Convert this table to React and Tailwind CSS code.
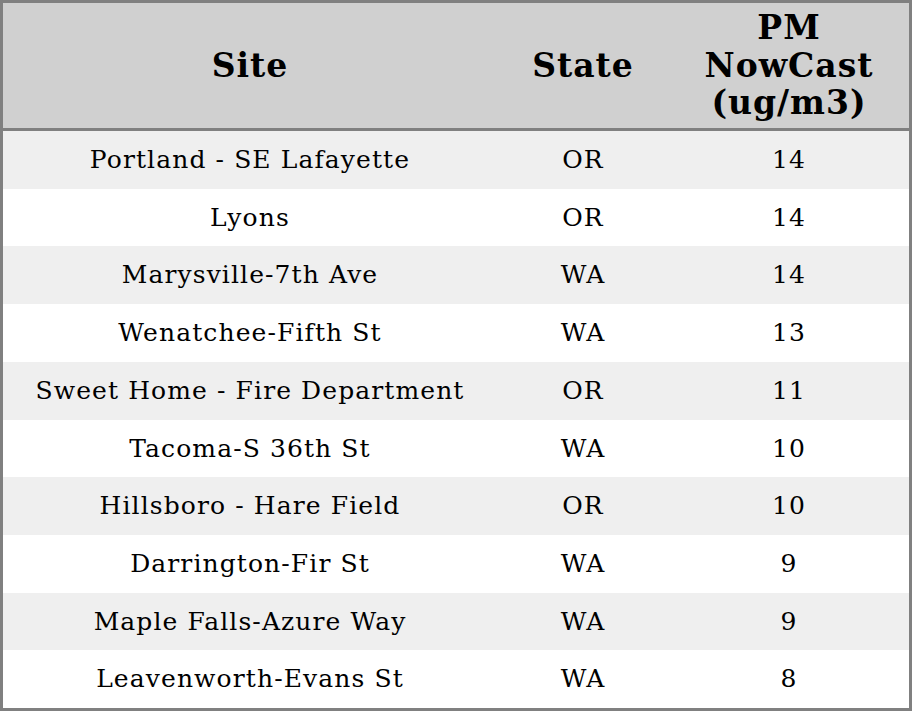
import React from "react";

const rows = [
  ["Portland - SE Lafayette", "OR", "14"],
  ["Lyons", "OR", "14"],
  ["Marysville-7th Ave", "WA", "14"],
  ["Wenatchee-Fifth St", "WA", "13"],
  ["Sweet Home - Fire Department", "OR", "11"],
  ["Tacoma-S 36th St", "WA", "10"],
  ["Hillsboro - Hare Field", "OR", "10"],
  ["Darrington-Fir St", "WA", "9"],
  ["Maple Falls-Azure Way", "WA", "9"],
  ["Leavenworth-Evans St", "WA", "8"],
];

export default function App() {
  return (
    <div
      className="w-[912px] h-[711px] border-[3px] border-[#808080] bg-white flex flex-col text-black"
      style={{ fontFamily: '"DejaVu Serif", serif' }}
    >
      <div className="grid grid-cols-[494px_172px_1fr] h-[128px] shrink-0 bg-[#d0d0d0] border-b-[3px] border-[#808080] text-[33px] font-bold leading-[37.5px] tracking-[1px]">
        <div className="flex items-center justify-center text-center">Site</div>
        <div className="flex items-center justify-center text-center">State</div>
        <div className="flex items-center justify-center text-center">
          PM
          <br />
          NowCast
          <br />
          (ug/m3)
        </div>
      </div>
      <div className="flex-1 grid grid-rows-10">
        {rows.map((r, i) => (
          <div
            key={i}
            className={`grid grid-cols-[494px_172px_1fr] items-center text-[25px] tracking-[1.1px] ${
              i % 2 === 0 ? "bg-[#efefef]" : "bg-white"
            }`}
          >
            <div className="text-center">{r[0]}</div>
            <div className="text-center">{r[1]}</div>
            <div className="text-center">{r[2]}</div>
          </div>
        ))}
      </div>
    </div>
  );
}
